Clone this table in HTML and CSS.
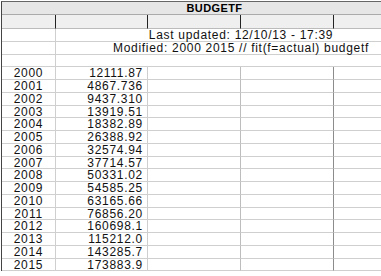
FILE: index.html
```
<!DOCTYPE html>
<html lang="en">
<head>
    <meta charset="UTF-8">
    <title>BUDGETF</title>
    <link rel="stylesheet" href="styles.css">
</head>
<body>
    <div id="sheet">
        <div class="title">BUDGETF</div>

        <div class="head"></div>
        <div class="head"></div>
        <div class="head"></div>
        <div class="head"></div>
        <div class="head last"></div>

        <div class="cell"></div>
        <div class="cell note">Last updated: 12/10/13 - 17:39</div>
        <div class="cell"></div>
        <div class="cell note">Modified: 2000 2015 // fit(f=actual) budgetf</div>
        <div class="cell"></div>
        <div class="cell note"></div>
    </div>

    <script>
        const sheet = document.getElementById('sheet');
        const values = [
            ['2000', '12111.87'], ['2001', '4867.736'], ['2002', '9437.310'],
            ['2003', '13919.51'], ['2004', '18382.89'], ['2005', '26388.92'],
            ['2006', '32574.94'], ['2007', '37714.57'], ['2008', '50331.02'],
            ['2009', '54585.25'], ['2010', '63165.66'], ['2011', '76856.20'],
            ['2012', '160698.1'], ['2013', '115212.0'], ['2014', '143285.7'],
            ['2015', '173883.9']
        ];

        values.forEach(([year, value]) => {
            const row = [year, value, '', '', ''];
            row.forEach((text, i) => {
                const cell = document.createElement('div');
                cell.className = 'cell col' + (i + 1);
                cell.textContent = text;
                sheet.appendChild(cell);
            });
        });
    </script>
</body>
</html>
```

FILE: styles.css
```
body {
    margin: 0;
    padding-top: 1px;
    overflow: hidden;
    background-color: #fff;
    font-family: "Liberation Sans", Arial, sans-serif;
    font-size: 12px;
    letter-spacing: 0.7px;
    color: #111;
}

#sheet {
    display: grid;
    grid-template-columns: 54px 92px 93px 93px 47px;
    grid-template-rows: 13px 14px;
    grid-auto-rows: 12.75px;
    width: 379px;
    margin-left: 1px;
    border-top: 1px solid #666;
    border-left: 1px solid #444;
}

.title {
    grid-column: 1 / -1;
    padding-left: 46px;
    background-color: #e6e6e6;
    border-bottom: 1px solid #aaa;
    text-align: center;
    font-weight: bold;
    font-size: 11px;
    letter-spacing: 0.4px;
    line-height: 12px;
    color: #000;
}

.head {
    background-color: #efefef;
    border-right: 1px solid #222;
    border-bottom: 1px solid #bbb;
}

.head.last {
    border-right: none;
}

.cell {
    box-sizing: border-box;
    border-right: 1px solid #cfcfcf;
    border-bottom: 1px solid #cfcfcf;
    line-height: 12px;
    white-space: nowrap;
}

.note {
    grid-column: 2 / 6;
    padding-left: 45px;
    border-right: none;
    text-align: center;
}

.col1 {
    text-align: center;
}

.col2 {
    text-align: right;
    padding-right: 4px;
}

.col3 {
    border-right-color: #bdbdbd;
}

.col4 {
    border-right-color: #8c8c8c;
}

.col5 {
    border-right: none;
}
```
